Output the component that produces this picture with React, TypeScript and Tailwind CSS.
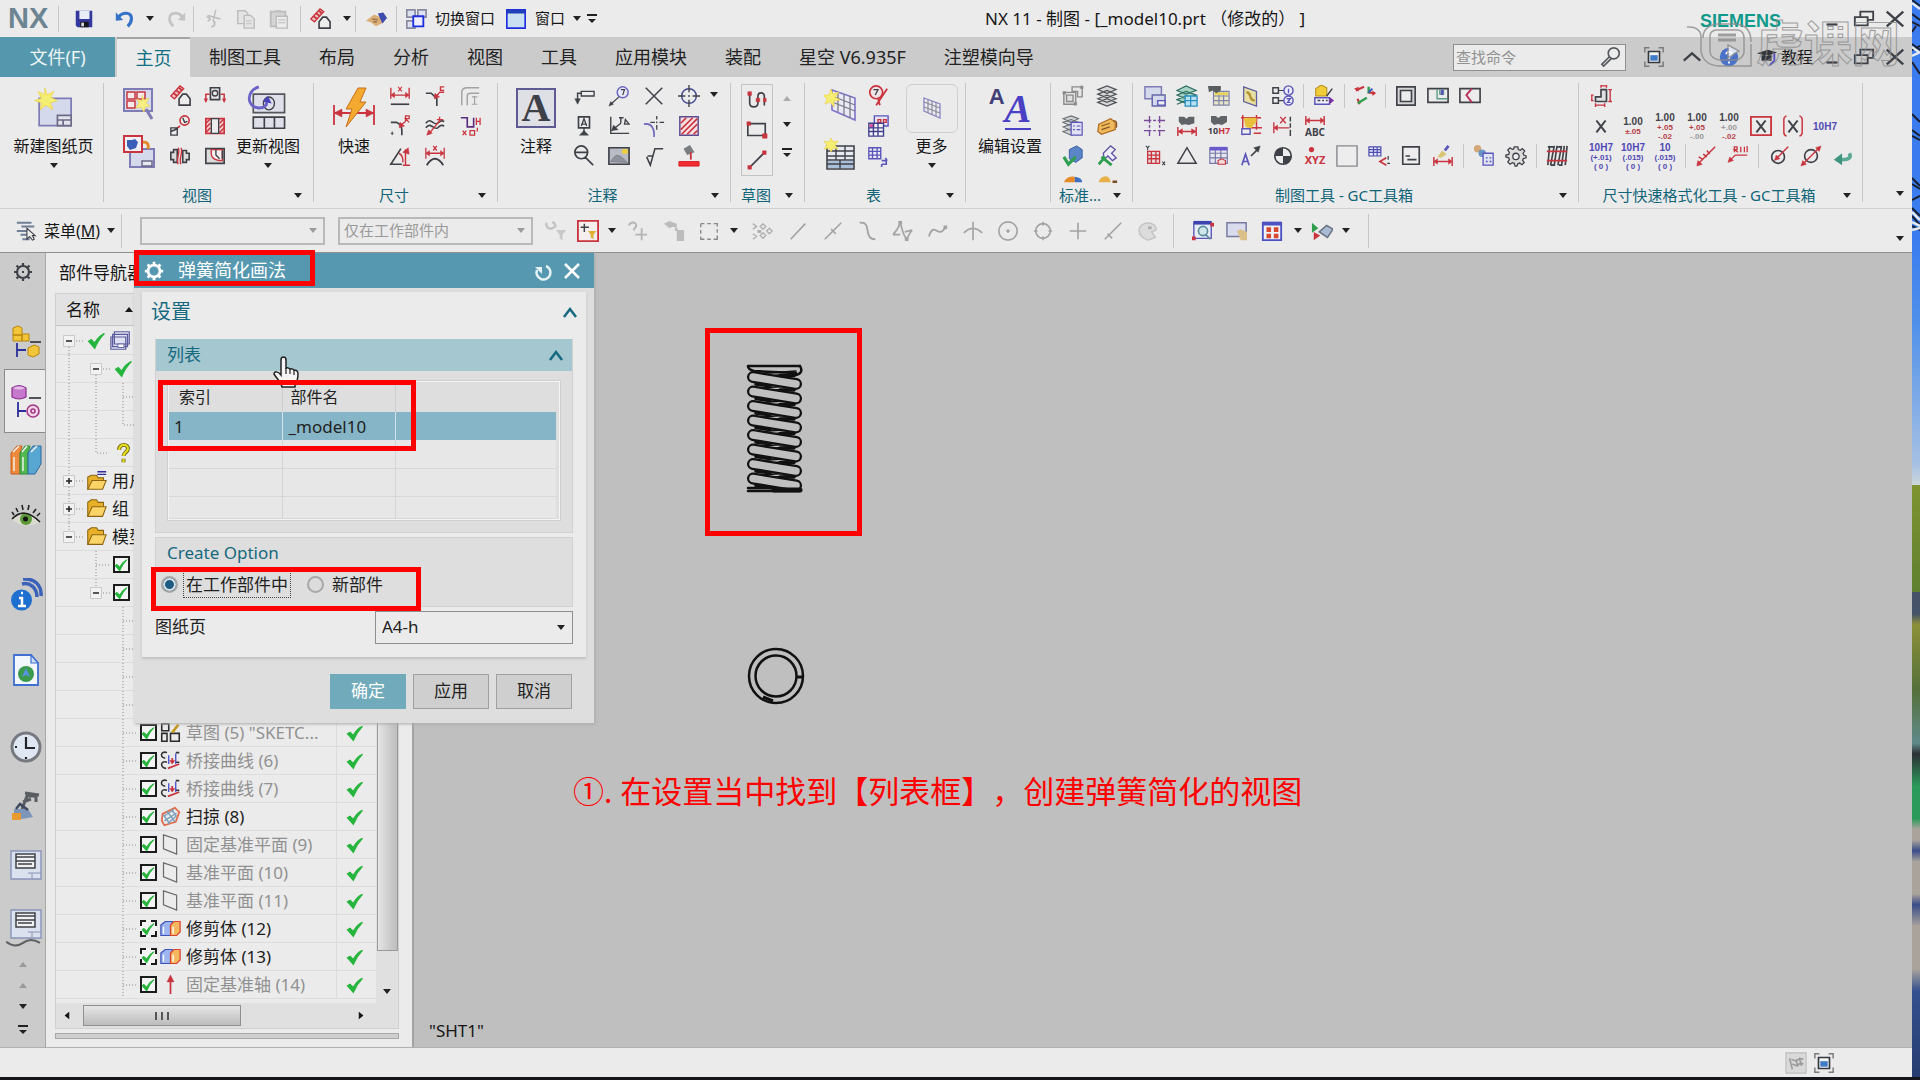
import { useState, type ReactNode } from "react"
import clsx from "clsx"

// stroke colour, fill colour, path, stroke width
type Shape = [string, string, string, number?]

const K = "#3f4148"
const R = "#c9343f"
const B = "#5a55b8"
const G = "#a3a3a3"
const L = "#d5d9ec"
const Y = "#f0cf3c"
const N = "#2f9e4f"
const O = "none"

const ICONS: Record<string, Shape[]> = {
    save: [[O, "#34389c", "M3 3h18v18H5l-2-2z"], [O, "#e8eef8", "M7 3h11v9H7z"], [O, "#16181c", "M8 15h9v6H8z"], [O, "#d8d8d8", "M9 16h3v4H9z"]],
    undo: [["#3572c8", O, "M5 10c4-6 15-6 14 2 0 4-2 6-4 8", 3.5], [O, "#3572c8", "M2 14V5l8 8z"]],
    redo: [["#c4c4c4", O, "M19 10C15 4 4 4 5 12c0 4 2 6 4 8", 3], [O, "#c4c4c4", "M22 14V5l-8 8z"]],
    cut: [["#bcbcbc", O, "M14 2l-3 12M5 8l14 4"], ["#bcbcbc", O, "M9 20a2.500 3 0 1 0 2-6M5 14a3 2 0 1 0-1-4", 2]],
    copy: [["#bcbcbc", "#e4e4e4", "M3 3h8l3 3v11H3z"], ["#bcbcbc", "#e4e4e4", "M10 8h7l4 4v10H10z"], ["#c8c8c8", O, "M12 14h6M12 17h6"]],
    paste: [["#bcbcbc", "#d4d4d4", "M3 4h16v16H3z", 2], ["#bcbcbc", "#ececec", "M9 9h12v13H9z"], ["#c4c4c4", O, "M11 13h8M11 16h8M8 3h6"]],
    section: [[R, "#f1c9c9", "M2 12L12 1l4 3L6 15z"], [R, O, "M5 9l4 3M8 6l4 3M11 3l3 3", 2], [K, "#ededed", "M11 22v-7l4-5h4l4 5v7z", 1.8]],
    hand: [[O, "#d9ae77", "M1 14L10 7l7 3 3 6-8 4-5-4z"], [O, "#3f4cae", "M14 6l6-1 4 6-5 6z"], ["#9b7549", O, "M8 12l6 1M9 15l4 0"]],
    switchwin: [["#8a8aa0", "#dce2f2", "M2 2h9v8H2zM14 2h9v8h-9zM2 14h9v8H2z", 1.8], ["#1e2fe0", "#eef", "M9 9h11v11H9z", 2]],
    window: [["#1e2fe0", "#c9dff2", "M2 2h20v20H2z", 1.8], [O, "#1e3fb8", "M2 2h20v4H2z"]],
    sheet: [["#7f7bb5", L, "M4 9h28v24H4z"], ["#6c6a88", "#e4e4ec", "M20 24h12v9H20zM20 28h12M25 28v5"], [Y, "#f4ee72", "M9 0l2 6 6-3-3 5 6 3-6 2 2 6-6-4-5 4 1-6-6-2 6-2-3-6 6 3z", 0.6]],
    viewwizard: [["#7f7bb5", L, "M2 2h28v22H2z", 2], [R, "#f5e9ec", "M5 5h8v7H5zM15 5h8v7h-8zM5 14h8v7H5z"], [Y, "#f6ef86", "M20 8l2 5 5-2-3 5 4 3-5 1-1 5-3-5-5 1 3-5-2-4 5 2z", 0.6], ["#7f7bb5", O, "M24 22l6 10", 3]],
    baseview: [["#7f7bb5", L, "M8 14h24v18H8z", 2], ["#6c6a88", "#e8e8f0", "M20 26h10v5H20z"], [R, "#f0f0f5", "M2 1h18v16H2z", 2], [O, "#3b5fb8", "M5 5h5l3-1 3 3-2 6-6 2-3-4z"], ["#e38b2c", O, "M21 7c5 0 6 3 5 7", 3]],
    detail: [[R, O, "M22 6a5 5 0 1 1-10 0 5 5 0 1 1 10 0M12 12l-5 4", 1.8], [K, O, "M2 14h7v8H2zM15 3l2 5 3-1M2 18l7-3", 1.5]],
    turned: [[K, "#e5e5e5", "M7 3h10v13H7z", 1.8], [K, O, "M15 9a3 3 0 1 1-6 0 3 3 0 1 1 6 0"], [R, O, "M6 10H2v8M18 10h4v8", 1.6], [R, R, "M0 15h4l-2 4zM20 15h4l-2 4z", 0.5]],
    hatched: [[R, "#f2cccc", "M2 4h20v16H2z", 1.8], [R, O, "M2 9l5-5M2 14l5-5M2 19l5-5M17 9l5-5M17 14l5-5M17 19l5-5"], [K, "#ededed", "M8 4h8v16H8z"]],
    breakview: [[K, "#dcdcdc", "M2 8h3V5h4v14H5v-3H2zM22 9h-3V6h-4v13h4v-3h3z", 1.8], [R, O, "M10 3c3 5-3 12 0 18M13 3c3 5-3 12 0 18"]],
    cutout: [[K, "#dcdcdc", "M2 4h20v16H2z", 1.8], [R, "#f8f0f0", "M8 5c-1 7 1 12 12 12V5z"], [K, O, "M13 5v6l4 4M20 6v9"]],
    update: [["#55565e", "#dedfe8", "M8 10h34v20H8z", 1.8], [K, "#dedfe8", "M8 35h34v12H8zM20 35v12M31 35v12", 1.8], [K, O, "M31 20a6 7 0 1 1-12 0 6 7 0 1 1 12 0"], ["#6a62c8", O, "M14 2C0 6 0 24 14 25c6 0 9-3 9-8", 3], [O, "#4b43b8", "M18 18l6-6 4 8z"]],
    quick: [[R, O, "M2 18v20M42 18v20M3 26h38", 1.8], [R, R, "M2 26l8-4v8zM42 26l-8-4v8z", 0.5], ["#c96f1c", "#f4a930", "M26 1h8l-6 14h6L14 40l6-18h-6z", 1]],
    dimlin: [[R, O, "M2 3v12M22 3v12M3 11h18", 1.5], [R, R, "M2 11l4-3v6zM22 11l-4-3v6z", 0.5], [K, O, "M2 21h20", 1.8], [R, O, "M10 2l4 5M14 2l-4 5", 1.2]],
    dimchamfer: [[K, O, "M2 9h6l6 6v8", 1.8], [R, O, "M13 13l4-5h5M22 2h-4v4h4", 1.5], [R, R, "M11 15l1-6 5 4z", 0.5]],
    dimthick: [[G, O, "M3 22V8q0-5 6-5h13M9 22V12q0-3 4-3h9", 1.6], [G, O, "M17 12v9M14 13h6M14 21h6", 1.3]],
    dimradius: [[K, O, "M2 8h6q6 3 6 8v6", 1.8], [R, O, "M13 11l5-4M18 7V1h4v3h-4l4 4", 1.4], [R, R, "M11 14l1-6 5 4z", 0.5], [K, O, "M2 20h3M3.500 18v4", 1]],
    dimcurve: [[K, O, "M2 14c6-8 9 5 14-1 2-2 4-2 6-1M2 9c6-8 9 5 14-1 2-2 4-2 6-1", 1.8], [R, O, "M5 21l13-16M14 5h7M17 2v6", 1.4], [R, R, "M3 22l2-6 4 4z", 0.5]],
    dimordinate: [["#5a2f80", O, "M2 3h7v10h7V3", 1.8], [R, O, "M19 3v8M23 3v8M19 7h4M20 14v4M4 17l4 5M8 17l-4 5M12 17h5v5h-5z", 1.4]],
    dimangle: [[K, O, "M13 4L2 21h12", 1.8], [R, O, "M11 9q5 3 4 10M18 5v17M15 22h8", 1.6], [R, R, "M15 8l6-5 1 7z", 0.5]],
    dimarc: [[R, O, "M2 3v12M22 3v12M3 9h18M10 1l4 5M14 1l-4 5", 1.4], [R, R, "M2 9l4-3v6zM22 9l-4-3v6z", 0.5], [K, O, "M3 22q9-14 18 0", 2]],
    leader: [[K, O, "M5 17V9h5", 1.6], [K, "#ededed", "M9 7h14v5H9z", 1.5], [K, K, "M2 15h6l-3 6z", 0.5]],
    balloon: [["#6b66bd", "#e9e9f6", "M22 8a6 6 0 1 1-12 0 6 6 0 1 1 12 0", 1.6], [K, O, "M12 13l-9 8M14 5h4l-2 6", 1.3], [K, K, "M1 23l2-5 3 3z", 0.5]],
    xmark: [[K, O, "M3 3l18 18M21 3L3 21", 1.6]],
    target: [["#44488e", O, "M20 12a8 8 0 1 1-16 0 8 8 0 1 1 16 0", 1.6], [K, O, "M12 0v8M12 16v8M0 12h8M16 12h8M12 11v2", 1.5]],
    datum: [[K, "#ededed", "M6 2h12v12H6z", 1.8], [K, O, "M9 12l3-8 3 8M10 10h4M12 14v7", 1.5], [K, K, "M7 22h10l-5-5z", 0.5]],
    anglet: [[K, O, "M3 2v18h20M4 17L14 9M12 3h5M14 3v6M18 10h5l-4-5z", 1.5], [K, K, "M4 17l2-6 5 5z", 0.5]],
    centermark: [["#6b66bd", O, "M1 10c8-2 12 5 11 14", 1.8], [K, O, "M15 1v4M15 7v2M15 11v5M8 8h5M18 8h5", 1.4]],
    hatch: [["#5b4b8e", "#f6dfe2", "M2 2h20v20H2z", 1.6], [R, O, "M3 9l6-6M3 16L16 3M4 21L21 4M10 21l11-11M17 21l4-4", 1.8]],
    zoomout: [[K, O, "M16 8a7 7 0 1 1-14 0 7 7 0 1 1 14 0M2 8h14M13 13l9 9", 1.8]],
    image: [[K, "#b9bcc4", "M1 3h22v18H1z", 1.8], [Y, Y, "M16 5h5v4h-5z", 1], ["#7d8088", "#8e929a", "M3 18c6-10 9-8 18 1z", 1]],
    rough: [[K, O, "M4 13l4 9 5-18h9M5 12h5", 1.7]],
    bucket: [[O, "#7a7d80", "M6 4l7-4 5 8-8 3z"], [R, O, "M14 8v8", 2], ["#dd1f28", "#ee2b30", "M1 18h22v5H1z", 1]],
    profile: [[K, O, "M4 3v12c0 6 9 6 9 0V8c0-5 7-5 7 0v10", 1.8], [R, R, "M2 3h4v4H2zM11 10h4v4h-4zM19 10h3v4h-3z", 0.5]],
    rect: [[K, O, "M2 5h19v13H2z", 1.8], [R, R, "M1 3h4v4H1zM18 16h5v5h-5z", 0.5]],
    line: [[K, O, "M4 20L20 4", 1.8], [R, R, "M2 18h4v4H2zM18 2h4v4h-4z", 0.5]],
    table: [["#7c74c8", "#eceaf4", "M8 2l23 8v22L8 22z", 1.6], ["#777a88", O, "M8 8l23 9M8 14l23 9M14 4v20M20 6v22M26 8v22", 1.3], [Y, "#f4ee72", "M7 1l2 5 6-2-4 5 5 3-6 1 0 6-4-5-5 2 2-5-4-4 6 0z", 0.6]],
    parts: [[K, "#e6eaf0", "M3 8h27v23H3z", 1.6], [K, O, "M3 13h27M3 18h27M3 22h27M12 8v14M21 8v14", 1.4], [O, "#a9bfda", "M4 23h25v7H4z"], [K, O, "M16 22v9M3 26h27", 1.4], [Y, "#f4ee72", "M7 0l2 4 5-1-3 4 3 4-5-1-2 4-2-4-5 1 3-4-3-4 5 1z", 0.6]],
    balloon2: [[R, "#eee3e6", "M17 8a7 7 0 1 1-14 0 7 7 0 1 1 14 0", 1.8], [K, O, "M7 5h5l-3 6", 1.4], [R, O, "M22 4L10 22M12 14l2 8", 2]],
    hole: [["#5a55b8", "#e4e2f6", "M8 1h15v11H8z", 1.5], [R, O, "M12 5h3v3h-3zM18 5h3v3h-3z"], ["#3f3f8a", "#f4f4fa", "M2 9h16v14H2z", 1.5], [O, "#d84c9c", "M3 10h5v4H3z"], ["#3f3f8a", O, "M2 14h16M2 18h16M7 9v14M12 9v14"]],
    tableexp: [["#5a55b8", "#ecebf8", "M2 3h13v12H2zM2 7h13M2 11h13M6 3v12M11 3v12", 1.5], [B, O, "M16 17h5v4h-5M20 14l2 3M16 21v3", 1.8]],
    tablesm: [["#8a84c4", "#eceaf4", "M4 2l16 6v14L4 15z", 1.3], ["#8a8c96", O, "M4 6l16 6M4 11l16 6M8 4v13M12 5v14M16 7v13", 1.2]],
    group: [["#8b8b8b", "#e0e0e0", "M2 8h13v13H2zM5 11h7v7H5z"], ["#8b8b8b", "#e8e8e8", "M11 2h11v11h-5V7h-6z"], ["#8b8b8b", "#8b8b8b", "M1 7h3v3H1zM13 19h3v3h-3zM20 1h3v3h-3z", 0.5]],
    layers: [["#4f5358", "#d8d8d8", "M2 19l10-4 10 4-10 4zM2 15l10-4 10 4-10 4zM2 10l10-4 10 4-10 4zM2 5l10-4 10 4-10 4z", 1.3]],
    layerdoc: [["#6a6e74", "#cfd4d8", "M1 18l9-3 8 3-8 4zM1 13l9-3 8 3-8 4zM1 8l9-3 8 3-8 4zM1 4l9-3 8 3-8 4z", 1.2], [B, "#e2e2f6", "M10 8h12v14H10zM12 12h2M16 12h4M12 16h2M16 16h4", 1.3]],
    tag: [["#b06a20", "#edb95c", "M3 10l13-6 5 4v8L6 21l-4-3z", 1.3], ["#8a5a20", O, "M6 12l9-3M6 16l9-3M19 7c4-3 4 5 3 7", 1.4]],
    checkcube: [["#345aa0", "#5a86c8", "M8 5l8-4 6 4v9l-7 5-7-4z", 1], [N, O, "M2 13l5 8 8-8", 3.5]],
    checkpipe: [["#5a4fa0", "#eeeef8", "M8 9l8-8 5 4-4 4 5 5-4 3-5-5-4 4z", 1.4], [N, O, "M3 21l7-8M6 13l11 9", 3]],
    cone: [[O, "#e88a28", "M2 8a10 9 0 0 1 12-6v6z"], [O, "#3f6fc0", "M14 2q8 1 8 6h-8z"]],
    cone2: [[O, "#e8b048", "M3 8a7 8 0 0 1 12-4l1 4z"], [O, "#7a4f28", "M18 6h5v3h-5z"]],
    newsheet: [["#7f7bb5", L, "M1 2h18v13H1z", 1.6], ["#6668a8", L, "M9 11h14v12H9z", 1.6], [B, "#eee", "M15 17h8v5h-8z"]],
    layers2: [["#2e6f62", "#a8d4c4", "M1 6l10-5 11 5-11 4zM1 11l10-4 11 4-11 4zM1 16l10-4 11 4-11 4zM1 21l10-4", 1.3], ["#2a8ec0", "#b8e2f2", "M10 12h13v11H10zM10 17h13M16 12v11", 1.4]],
    findtable: [["#8084a8", "#e9e6c8", "M6 7h17v15H6zM6 12h17M6 17h17M12 7v15M17 7v15", 1.3], [O, "#e8d35c", "M7 8h15v3H7z"], [O, "#5a5d60", "M0 1h14v5l-5 3-4-3-4 2z"]],
    pagey: [["#5f5fa0", "#e8e0a0", "M4 2l14 5v16L4 18z", 1.4], ["#b09030", O, "M7 8c7 0 1 8 9 9", 2.5]],
    balloons12: [[K, "#ededed", "M1 3h6v6H1zM1 14h6v6H1z", 1.6], [K, O, "M7 6h6M7 17h6", 1.3], [B, "#eeeefa", "M23 6a5 5 0 1 1-10 0 5 5 0 1 1 10 0M23 17a5 5 0 1 1-10 0 5 5 0 1 1 10 0", 1.5], [B, O, "M18 4v5M16 15h4l-3 4h3"]],
    cubelabel: [["#b8901c", "#f2cd3a", "M3 4l6-4 6 3v9H3z", 1.2], [B, "#f0f0fa", "M2 14h16v7H2z", 1.6], [K, O, "M5 17h3M10 17h2M14 17h2M15 12l6-8", 1.6], [O, "#7a2fa0", "M18 13l5 4-5 4z"]],
    csys: [[R, O, "M2 6l9-4M15 8l8 1M4 15l2 6", 2.4], [O, R, "M20 6l4 3-4 3zM0 4l5-2v5z"], [N, O, "M4 20l10-6M16 9V2", 2.6], ["#3050c0", O, "M16 8l4-4", 2]],
    frame: [[K, "#d4d4d4", "M2 2h20v20H2z", 1.8], [K, "#ededed", "M6 6h12v12H6z", 1.8]],
    frame2: [[K, "#ececec", "M1 4h22v15H1z", 1.8], ["#5a9a80", O, "M11 5v10h11M14 5v5h4V5", 1.5], [O, B, "M15 5h3v6h-3z"]],
    frame3: [[K, "#ececec", "M1 4h22v15H1z", 1.8], ["#b82f58", O, "M14 4L8 11l6 8", 2]],
    gridlines: [["#7a4b98", O, "M6 1v8M6 11v3M6 16v7M17 1v8M17 11v3M17 16v7M0 6h8M10 6h3M15 6h8M0 17h8M10 17h3M15 17h8", 1.5]],
    finddim: [[O, "#606468", "M3 2h6l2 2 3-2h6v7l-6 2-4-1-4 1-3-4z"], [R, O, "M2 13v10M22 13v10M3 18h18", 1.6], [R, R, "M2 18l5-3v6zM22 18l-5-3v6z", 0.5]],
    find10: [[O, "#606468", "M4 0h5l2 2 3-2h6v6l-5 3-4-1-4 1-3-3z"]],
    dimrect: [[R, O, "M1 3h22M3 0v22M18 0v16M12 14h12M15 20h8", 1.6], [O, "#e8c03c", "M4 3h14v4l-6 8-6-2z"], [B, "#eee", "M2 15h9v6H2z", 1.5]],
    dimx: [[R, O, "M2 8v12M3 14h16M9 2l6 7M15 2l-6 7", 1.5], [R, R, "M2 14l4-3v6z", 0.5], [K, O, "M20 2v5M20 9v5M20 16v7", 1.6]],
    dimabc: [[R, O, "M2 1v10M22 1v10M3 6h18", 1.6], [R, R, "M2 6l4-3v6zM22 6l-4-3v6z", 0.5]],
    gridxy: [[R, "#e9dada", "M4 7h13v13H4zM4 11h13M4 15h13M8 7v13M13 7v13", 1.4], [K, O, "M2 1l2 2 2-2M4 3v3M20 18l3 4M23 18l-3 4", 1.2]],
    triangle: [[K, O, "M12 3l10 17H2z", 1.6]],
    tabler: [["#7478a8", "#e8e6ee", "M2 3h19v17H2zM2 9h19M2 14h19M8 3v17M14 3v17", 1.3], [O, "#6a5acb", "M2 2h19v4H2z"], [R, "#f5dada", "M11 21v-4l4-2 4 2v4z", 1.2]],
    arrowA: [[K, O, "M12 12l7-7", 1.8], [K, K, "M22 1l-7 2 5 5z", 0.5], [B, O, "M2 22l4-12 4 12M3 18h6", 1.8]],
    quarter: [[K, "#ededed", "M21 12a9 9 0 1 1-18 0 9 9 0 1 1 18 0", 1.8], [O, K, "M12 3v9H3a9 9 0 0 1 9-9zM12 21v-9h9a9 9 0 0 1-9 9z"]],
    point: [[O, R, "M7 4a3 3 0 1 1-6 0 3 3 0 1 1 6 0"]],
    blank: [["#85878c", "#ededed", "M1 1h22v22H1z", 1.5]],
    tablec: [["#4c4cb0", "#e8e8fa", "M1 2h13v10H1zM1 5h13M1 8h13M6 2v10M10 2v10", 1.3], [R, O, "M20 14l-7 4 7 4", 1.8], [K, O, "M22 12v4M21 20h3", 1.3]],
    form: [[K, "#ededed", "M3 2h18v19H3z", 1.8], [K, O, "M6 12h5M8 16h10", 1.8]],
    brushdim: [[R, O, "M2 13v10M22 13v10M3 18h18", 1.6], [R, R, "M2 18l4-3v6zM22 18l-4-3v6z", 0.5], [O, "#d8c472", "M6 13l5-7 5 4-6 4z"], [B, O, "M14 6l4-5", 3]],
    gearlist: [[O, "#d2a878", "M9 4a4 4 0 1 1-8 0 4 4 0 1 1 8 0"], [O, "#6b94c4", "M14 9a4 4 0 1 1-8 0 4 4 0 1 1 8 0"], [B, "#e2e4f4", "M11 9h11v13H11zM14 14h2M18 14h2M14 18h2M18 18h2", 1.4]],
    gear: [[K, "#dcdcdc", "M10 2h4l.6 3 2 .8L19 4l2.500 2.500-1.800 2.500.8 2L23 12v2l-3 .8-.8 2L21 19l-2.500 2.500-2.500-1.800-2 .8L13 23h-2l-.9-3-2-.8L5.500 21 3 18.500l1.800-2.500-.8-2L1 13v-2l3-.8.8-2L3 5.500 5.500 3 8 4.800l1.500-.5z", 1.4], [K, "#ededed", "M15.500 12.500a3.500 3.500 0 1 1-7 0 3.500 3.500 0 1 1 7 0", 1.4]],
    springs: [[K, O, "M4 1L2 22M9 1L5 22M12 1l-3 21M17 1l-4 21M20 1l-3 21M23 1l-2 21M2 2h7M12 2h5M5 22h5M14 22h4", 1.8], [R, O, "M1 7h22M1 17h22", 1.8]],
    dimpart: [[K, "#e0e0e0", "M12 5h6v13H6v-5h6z", 1.8], [R, O, "M12 1h6M12 0v3M18 0v3M22 5v13M20 5h4M20 18h4M6 22h10M6 20v4M16 20v4M1 11h3M1 17h3M2 11v6", 1.5]],
    plainx: [[K, O, "M7 6l10 13M17 6L7 19", 2.2]],
    boxedx: [[R, O, "M1 2h22v20H1z", 2], [K, O, "M7 6l10 13M17 6L7 19", 2.2]],
    parenx: [[R, O, "M5 1Q2 2 2 5v14q0 3 3 4M19 1q3 1 3 4v14q0 3-3 4", 1.6], [K, O, "M7 6l10 13M17 6L7 19", 2.2]],
    slopedim: [[R, O, "M3 21L22 2M4 13l5 3M9 10l4 3M13 6l3 4", 1.6], [R, R, "M2 23l1-6 5 4z", 0.5]],
    leaddim: [[R, O, "M3 17l6-6h13M8 8V2h3v3H8l4 3M15 2v6M19 2v6M22 1v7", 1.4], [R, R, "M1 19l2-6 4 4z", 0.5]],
    dia1: [[K, O, "M18 13a7 7 0 1 1-14 0 7 7 0 1 1 14 0", 1.8], [R, O, "M10 14L22 2", 1.6], [R, R, "M7 17l2-6 4 4z", 0.5]],
    dia2: [[K, O, "M19 12a7 7 0 1 1-14 0 7 7 0 1 1 14 0", 1.8], [R, O, "M3 21L21 3", 1.6], [R, R, "M1 23l2-6 4 4zM23 1l-2 6-4-4z", 0.5]],
    back: [["#5aa896", O, "M19 9c3 6-3 7-9 7", 4], [O, "#3f9480", "M2 16l9-7v13z"]],
    menu: [["#6f7f98", O, "M2 3h16M7 7h14M2 12h12M6 16h8M8 21h8", 2.2], [K, "#eee", "M13 9v12l3-3 3 4 2-1-2-4h3z", 1.2]],
    filterg: [["#c2c2c2", O, "M2 3a4 4 0 1 0 8 4M8 2a5 5 0 0 1 3 6", 2.5], [O, "#c8c8c8", "M12 11h11l-4 5v6l-3-2v-4z"]],
    filter: [[R, "#f5eeee", "M1 1h22v22H1z", 2], [K, O, "M8 4v9M4 8h9", 1.6], [O, "#e0ae30", "M12 12h9l-3 4v5l-3-2v-3z"]],
    rotplus: [["#b4b4b4", O, "M2 6c2-5 9-4 8 1l-3 4M9 16h13M16 9v13", 2]],
    filterdoc: [[O, "#bcbcbc", "M1 4l6-3 8 3v5l-4-2-4 2zM13 9h3v3h-3zM15 11h8v12h-8z"]],
    marquee: [["#8a8a8a", O, "M3 4h4M10 4h4M17 4h4v3M21 10v4M21 17v4h-4M14 21h-4M7 21H3v-3M3 15v-4M3 8V4", 1.5]],
    dots: [["#b0b0b0", O, "M1 4l4 3-4 3M1 15l4 3-4 3M12 4l3 3-3 3-3-3zM12 14l3 3-3 3-3-3zM19 9l3 3-3 3-3-3z", 1.5], [O, "#aaa", "M6 11h4v3H6z"]],
    seg: [[G, O, "M4 21L20 4", 1.8]],
    segdot: [[G, O, "M3 21L21 3M10 10l5 5", 1.8]],
    curve: [[G, O, "M3 3c14-2 3 18 17 18", 2]],
    spl: [[G, O, "M1 16C5 12 8 6 9 3c2 6 3 14 7 18 2-4 4-8 6-10M1 16h8M14 13l8-2", 1.8], [O, G, "M7 1h4v4H7zM14 19h4v4h-4z"]],
    wave: [[G, O, "M2 18C8 0 12 22 20 8", 2], [O, G, "M18 6h4v4h-4z"]],
    arcv: [[G, O, "M2 14q10-10 20 0M12 2v20", 1.8]],
    circ: [[G, O, "M22 12a10 10 0 1 1-20 0 10 10 0 1 1 20 0M12 10v4M10 12h4", 1.8]],
    circ4: [[G, O, "M20 12a8 8 0 1 1-16 0 8 8 0 1 1 16 0M12 2v4M12 18v4M2 12h4M18 12h4", 1.8]],
    plus: [[G, O, "M12 3v18M3 12h18", 1.8]],
    seg2: [[G, O, "M3 21L21 3M6 15l5 5", 1.8]],
    face: [["#c4c4c4", "#dcdcdc", "M3 8c6-8 18-5 18 3l-5 2 4 6-8 3C4 19 1 14 3 8z", 1.6], [O, "#b0b0b0", "M12 7h4v3h-4z"]],
    fitwin: [[B, "#e6eef8", "M2 2h19v18H2z", 1.5], [O, "#3c44b0", "M2 1h19v4H2z"], ["#5d8a9a", "#cfe6ea", "M17 12a5 5 0 1 1-10 0 5 5 0 1 1 10 0M15 16l5 5", 1.8], [O, R, "M0 18h4v4H0zM20 3h4v4h-4z"]],
    panwin: [["#777aa0", "#d8dcec", "M1 3h21v15H1z", 1.6], [O, "#dcc08a", "M12 12l4-2 7 3v9h-7z"]],
    layout: [["#4b51c0", "#eef0fa", "M2 3h20v19H2z", 2], [O, "#4b51c0", "M2 2h20v4H2z"], [O, "#d8482c", "M6 8h5v5H6zM14 8h5v5h-5zM6 15h5v5H6zM14 15h5v5h-5z"]],
    orient: [[O, N, "M1 3l7 6-7 5z"], [O, R, "M3 13l7 4-7 5z"], ["#6b7380", "#a9bcd4", "M9 13l8-7 7 4-6 9z", 1.6]],
    full: [["#7b7b7b", O, "M2 7V2h5M17 2h5v5M22 17v5h-5M7 22H2v-5", 1.6], ["#33383f", "#f4f4f4", "M6 6h12v12H6z", 1.8], [O, "#3e7cc8", "M8 10h8v6H8z"]],
    flag: [["#bdbdbd", "#d9d9d9", "M1 1h22v22H1z", 1.2], ["#9c9c9c", O, "M5 7l3 12M7 8l5 2 4-3 4 1M8 13l5 2 4-3 3 1M12 8l2 8M16 8l2 7", 1.8]],
    mag: [["#55585c", "#ececec", "M21 8a6 6 0 1 1-12 0 6 6 0 1 1 12 0M10 12l-8 8 2 2 8-8", 1.8]],
    min: [[K, O, "M6 18h12", 2.4]],
    restore: [[K, O, "M8 9V4h14v9h-5M2 10h14v9H2z", 2]],
    close: [[K, O, "M3 4l18 16M21 4L3 20", 2.6]],
    up: [[K, O, "M3 16l9-8 9 8", 2.4]],
    help: [[O, "#4a72c8", "M22 12a10 10 0 1 1-20 0 10 10 0 1 1 20 0"], ["#fff", O, "M9 9c0-4 7-3 6 0-.5 2-3 2-3 5M12 17v2", 2]],
    hat: [[O, "#33343a", "M1 8l12-4 10 3-11 4zM6 10v6h11v-6z"], ["#5a4fc0", O, "M20 8v8l-5 5", 2]],
    railgear: [[K, O, "M18 12a6 6 0 1 1-12 0 6 6 0 1 1 12 0M12 3v3M12 18v3M3 12h3M18 12h3M5.500 5.500l2 2M16.500 16.500l2 2M18.500 5.500l-2 2M7.500 16.500l-2 2", 2.2], [O, K, "M11 11h2v2h-2z"]],
    asmnav: [["#b8860b", "#f3c53a", "M3 3l5-2 4 2v7H3zM3 10h9v6H3zM12 9h7v7h-7z", 1], ["#2b2f9a", O, "M7 18v14M7 25h9", 1.8], [K, O, "M20 17h11", 1.8], ["#b8860b", "#f3c53a", "M18 23l6-3 5 2v7l-6 3-5-2z", 1]],
    partnav: [["#8a2f8e", "#c678cc", "M1 4q7-5 14 0v9q-7 4-14 0z", 1.2], [O, "#e7bfe9", "M2 4q6-3 12 0-6 3-12 0z"], ["#2b2f9a", O, "M7 18v15M7 27h8", 1.8], [K, O, "M18 14h12", 1.8], ["#a03a86", "#f3d3e8", "M28 27a6 6 0 1 1-12 0 6 6 0 1 1 12 0M24 27a2 2 0 1 1-4 0 2 2 0 1 1 4 0", 1.6]],
    books: [["#c85d1c", "#ee8a3c", "M1 9l6-7h5l-2 7v21H1z", 1], ["#2d8a34", "#52b84e", "M10 9l5-7h5l-2 7v21h-8z", 1], ["#2a6a9e", "#58a6d2", "M18 9l5-7h8v18l-6 10h-7z", 1], ["#f0f0f0", O, "M3 8l6-6M12 8l5-6M21 8l6-6M4 13v14M13 13v14", 1.5]],
    eye: [[O, "#d8dcd0", "M2 20q12-12 28 2-14 8-28-2z"], [O, "#5f9a3a", "M22 19a6 6 0 1 1-12 0 6 6 0 1 1 12 0"], [O, "#141414", "M18 19a2.500 2.500 0 1 1-5 0 2.500 2.500 0 1 1 5 0"], ["#222", O, "M2 19q12-13 28 3M4 15l-2-3M8 12l-2-4M13 10l-1-5M18 10l1-5M23 13l3-4M27 16l3-3", 1.6]],
    info: [["#3a62b8", O, "M12 6c8-2 15 4 15 13M13 1c11-1 19 6 18 17", 3.5], [O, "#1d6fd0", "M22 22a10.500 10.500 0 1 1-21 0 10.500 10.500 0 1 1 21 0"], ["#fff", O, "M9 20h3v8M8 28h8M11 15h2", 2.5]],
    web: [["#3f6fd0", "#f2f6fd", "M4 1h17l7 8v22H4z", 1.8], ["#3f6fd0", "#cfdff8", "M21 1v8h7z", 1.2], [O, "#3a9a4e", "M24 20a8 8 0 1 1-16 0 8 8 0 1 1 16 0"], [O, "#5a94e0", "M16 14l4 9-4-2-4 2z"]],
    clock: [["#777a80", "#dfe8f2", "M30 16a14 14 0 1 1-28 0 14 14 0 1 1 28 0", 3], ["#22252a", O, "M16 6v11h9M5 16h2M16 28v-2", 2.2]],
    robot: [["#5a5d62", O, "M12 20l5-13h9v6M15 4l14 2M13 13l8-3", 3], [O, "#7d95b8", "M4 20h14l5 8-11 2-8-3z"], [O, "#e89a30", "M2 24h9v7H2z"], ["#3f4a60", O, "M6 20l4-5 8 6", 2.5]],
    panel: [["#8a94b8", "#dbe1ee", "M1 2h30v28H1z", 1.4], [K, "#f2f2f2", "M6 5h19v14H6z", 1.5], [K, O, "M6 8h19M6 12h19M8 15h14", 1.5], ["#8a94b8", O, "M18 24h13M22 24v6", 1]],
    squig: [["#5e6064", O, "M1 14q8 6 15 1t15 0", 1.8]],
    check: [["#26b53c", "#26b53c", "M3 13l3-2 4 4q4-8 11-11-7 7-11 17z", 1.4]],
    part: [["#5c5c9c", "#dfe1f2", "M5 2h17v14H5zM3 5h17v14H3zM1 8h17v14H1z", 1.4], ["#5c5c9c", "#fff", "M9 16h7v4H9z", 1]],
    question: [["#6a6410", O, "M7 9c0-8 11-7 10-1-.5 4-5 4-5 8M12 19v4", 4.5], ["#e8dc20", O, "M7 9c0-8 11-7 10-1-.5 4-5 4-5 8M12 19v4", 2.5]],
    folder: [["#8a6410", "#e8b028", "M2 21V5l4-3h6l2 3h6v5", 1.2], ["#8a6410", "#fbd468", "M2 21l5-11h16l-4 11z", 1.2]],
    folderu: [["#8a6410", "#e8b028", "M2 22V8l4-2h6l2 3h6v3", 1.2], ["#8a6410", "#fbd468", "M2 22l5-10h16l-4 10z", 1.2], ["#2c2f9c", O, "M13 2h10M13 5h10", 1.5]],
    sketch: [["#2b2b2b", O, "M2 2h8v8H2zM2 13h6v9H2zM12 13h10v9H12z", 1.8], ["#c8961c", O, "M14 12l7-9", 3]],
    bridge: [["#333", O, "M8 3c-8-3-8 7-2 6M8 14c-8-3-8 7-1 7M22 3h-4M18 14h4", 1.8], ["#3b43c8", O, "M10 6v10M18 4v12", 1.4], [R, O, "M9 21l13-5M14 9v6", 2], [R, R, "M11 12h6l-3 4z", 0.5]],
    sweep: [["#df6a4c", O, "M3 9L17 2l5 5-4 11L5 22l-3-5z", 2], ["#7ba0bc", O, "M4 12l12-8M5 17L19 8M9 20l9-8M8 6l9 12M13 4l6 8M4 10l7 10", 1.6]],
    plane: [["#6a6c70", "#ececec", "M4 1l15 5v17L4 17z", 1.4]],
    trim: [["#3e52b8", "#9db6f0", "M1 8l5-4h8v16H1z", 1.4], ["#d84430", "#f5b860", "M12 8l4-4h7v12l-4 4h-7z", 1.4], ["#fff", O, "M4 10v8M15 10v8", 1.5]],
    axis: [[R, O, "M12 8v15", 2], [R, R, "M8 9h8l-4-8z", 0.5]],
}

function Icon({ name, className = "size-6", box = "0 0 24 24" }: { name: string; className?: string; box?: string }) {
    return (
        <svg viewBox={box} className={clsx("shrink-0", className)} aria-hidden="true">
            {ICONS[name].map(([stroke, fill, d, width], i) => (
                <path key={i} d={d} stroke={stroke} fill={fill} strokeWidth={width ?? 1.5} />
            ))}
        </svg>
    )
}

function Caret({ className = "text-[#222]" }: { className?: string }) {
    return (
        <svg viewBox="0 0 8 5" className={clsx("h-[5px] w-2 shrink-0", className)} aria-hidden="true">
            <path d="M0 0h8L4 5z" fill="currentColor" />
        </svg>
    )
}

function OverflowCaret() {
    return (
        <svg viewBox="0 0 10 10" className="size-[10px] shrink-0 text-[#222]" aria-hidden="true">
            <path d="M0 0h10v2H0zM1 5h8l-4 4z" fill="currentColor" />
        </svg>
    )
}

function Tool({ name, label, className = "w-8" }: { name: string; label?: string; className?: string }) {
    return (
        <button type="button" aria-label={label ?? name} className={clsx("flex h-[30px] shrink-0 items-center justify-center", className)}>
            <Icon name={name} className="size-[22px]" />
        </button>
    )
}

function Divider({ className = "h-6" }: { className?: string }) {
    return <div className={clsx("w-px shrink-0 bg-[#c6c6c6]", className)} />
}

// "|" in a row stands for a thin divider
function ToolRow({ items, cell }: { items: string[]; cell?: string }) {
    return (
        <div className="flex items-center">
            {items.map((item, i) =>
                item === "|" ? (
                    <div key={i} className="flex w-[9px] justify-center">
                        <Divider />
                    </div>
                ) : (
                    <Tool key={i} name={item} className={cell} />
                )
            )}
        </div>
    )
}

function Group({ label, className, more = true, children }: { label?: string; className: string; more?: boolean; children?: ReactNode }) {
    return (
        <section className={clsx("flex shrink-0 pt-1", className)}>
            <div className="flex min-w-0 flex-1 flex-col">
                <div className="flex h-[102px] overflow-hidden">{children}</div>
                <div className="flex h-6 items-center pr-[11px]">
                    <h2 className="flex-1 pr-1 text-center text-[15px] whitespace-nowrap text-[#0f6478]">{label}</h2>
                    {more && <Caret />}
                </div>
            </div>
            <Divider className="my-[2px] h-[119px]" />
        </section>
    )
}

function BigTool({ children, label, caret, className }: { children: ReactNode; label: string; caret?: boolean; className?: string }) {
    return (
        <button type="button" className={clsx("flex shrink-0 flex-col items-center", className)}>
            <span className="flex h-[54px] items-center justify-center">{children}</span>
            <span className="h-7 text-[16px] leading-[22px] whitespace-nowrap">{label}</span>
            {caret && <Caret />}
        </button>
    )
}

function Tolerance({ top, lines, blue }: { top: string; lines: string[]; blue?: boolean }) {
    return (
        <button type="button" className="flex h-[30px] w-8 flex-col items-center justify-center font-['Liberation_Sans',sans-serif] font-bold">
            <span className={clsx("text-[10px] leading-[11px]", blue ? "text-[#5048b4]" : "text-[#3f4148]")}>{top}</span>
            {lines.map((line, i) => (
                <span key={i} className={clsx("text-[8px] leading-[9px]", blue ? "text-[#5048b4]" : line.endsWith("00") ? "text-[#999]" : "text-[#b8414a]")}>
                    {line}
                </span>
            ))}
        </button>
    )
}

function TitleBar() {
    return (
        <header className="flex h-[37px] shrink-0 items-center pr-[2px]">
            <span className="w-[58px] pl-2 font-['Liberation_Sans',sans-serif] text-[29px] leading-none font-bold text-[#6d8593]">NX</span>
            <Divider className="h-[26px]" />
            <Tool name="save" className="w-[50px]" />
            <Tool name="undo" className="w-8" />
            <div className="flex w-[18px] justify-center"><Caret /></div>
            <Tool name="redo" className="w-[34px]" />
            <Divider className="h-[26px]" />
            <Tool name="cut" className="w-10" />
            <Tool name="copy" className="w-6" />
            <Tool name="paste" className="w-[42px]" />
            <Divider className="h-[26px]" />
            <Tool name="section" className="w-[38px]" />
            <div className="flex w-4 justify-center"><Caret /></div>
            <Divider className="h-[26px]" />
            <Tool name="hand" className="w-10" />
            <Divider className="h-[26px]" />
            <button type="button" className="flex items-center gap-2 pl-2 text-[15px]">
                <Icon name="switchwin" className="size-[22px]" />
                切换窗口
            </button>
            <button type="button" className="flex items-center gap-2 pl-[10px] text-[15px]">
                <Icon name="window" className="size-[22px]" />
                窗口
                <Caret />
            </button>
            <div className="pl-[6px]"><OverflowCaret /></div>
            <h1 className="flex-1 pl-[388px] text-[17px] whitespace-nowrap">NX 11 - 制图 - [_model10.prt （修改的） ]</h1>
            <span className="w-[116px] pt-[5px] font-['Liberation_Sans',sans-serif] text-[18px] leading-none font-bold text-[#119a8c]">SIEMENS</span>
            <Tool name="min" label="最小化" />
            <Tool name="restore" label="还原" />
            <Tool name="close" label="关闭" className="w-[30px]" />
        </header>
    )
}

const TABS = ["制图工具", "布局", "分析", "视图", "工具", "应用模块", "装配", "星空 V6.935F", "注塑模向导"]

function TabBar() {
    return (
        <nav className="flex h-10 shrink-0 items-stretch bg-[#cbcbcb] pr-[2px] text-[18px]">
            <button type="button" className="w-[115px] bg-[#5598ae] text-[#eef6f8]">文件(F)</button>
            <button type="button" className="ml-[2px] w-[73px] border-t-2 border-[#a4a4a4] bg-[#ebebeb] text-[#0f6f84]">主页</button>
            {TABS.map((tab) => (
                <button key={tab} type="button" className="px-[19px] whitespace-nowrap text-[#222]">{tab}</button>
            ))}
            <div className="flex-1" />
            <div className="flex items-center">
                <label className="flex h-[27px] w-[173px] items-center border border-[#8f8f8f] bg-[#ebebeb] pr-[3px]">
                    <input aria-label="查找命令" placeholder="查找命令" className="w-0 flex-1 pl-[2px] text-[15px] outline-none placeholder:text-[#929292]" />
                    <Icon name="mag" className="size-[22px]" />
                </label>
                <Tool name="full" label="全屏" className="w-14" />
                <Tool name="up" label="收起" className="w-5" />
                <Tool name="help" label="帮助" className="w-[54px]" />
                <button type="button" className="flex w-[60px] items-center text-[16px]">
                    <Icon name="hat" className="size-[22px]" />
                    <span className="pl-[3px]">教程</span>
                </button>
                <Tool name="min" label="最小化窗口" />
                <Tool name="restore" label="还原窗口" />
                <Tool name="close" label="关闭窗口" className="w-[30px]" />
            </div>
        </nav>
    )
}

function Ribbon() {
    return (
        <div className="flex h-[132px] shrink-0 border-b border-[#cfcfcf]">
            <Group className="w-[104px]" more={false}>
                <BigTool label="新建图纸页" caret className="w-full pl-1">
                    <Icon name="sheet" box="0 0 34 35" className="size-[40px]" />
                </BigTool>
            </Group>
            <Group label="视图" className="w-[210px]">
                <div className="flex w-[58px] flex-col items-end gap-[14px] pt-[6px] pr-[6px]">
                    <Icon name="viewwizard" box="0 0 34 34" className="size-[34px]" />
                    <Icon name="baseview" box="0 0 34 34" className="size-[34px]" />
                </div>
                <div className="flex flex-col">
                    <ToolRow items={["section", "turned"]} cell="w-[35px]" />
                    <ToolRow items={["detail", "hatched"]} cell="w-[35px]" />
                    <ToolRow items={["breakview", "cutout"]} cell="w-[35px]" />
                </div>
                <BigTool label="更新视图" caret className="w-[72px]">
                    <Icon name="update" box="0 0 48 50" className="size-[46px]" />
                </BigTool>
            </Group>
            <Group label="尺寸" className="w-[184px]">
                <BigTool label="快速" className="w-[68px] pl-3">
                    <Icon name="quick" box="0 0 44 42" className="size-[44px]" />
                </BigTool>
                <div className="flex flex-col">
                    <ToolRow items={["dimlin", "dimchamfer", "dimthick"]} cell="w-[35px]" />
                    <ToolRow items={["dimradius", "dimcurve", "dimordinate"]} cell="w-[35px]" />
                    <ToolRow items={["dimangle", "dimarc"]} cell="w-[35px]" />
                </div>
            </Group>
            <Group label="注释" className="w-[233px]">
                <BigTool label="注释" className="w-[68px] pl-2">
                    <span className="flex size-10 items-center justify-center border-2 border-[#5e5a92] bg-[#dfe0e6] font-['Liberation_Serif',serif] text-[40px] leading-none font-bold text-[#3f4148]">A</span>
                </BigTool>
                <div className="flex flex-col">
                    <ToolRow items={["leader", "balloon", "xmark", "target"]} cell="w-[35px]" />
                    <ToolRow items={["datum", "anglet", "centermark", "hatch"]} cell="w-[35px]" />
                    <ToolRow items={["zoomout", "image", "rough", "bucket"]} cell="w-[35px]" />
                </div>
                <div className="pt-[11px] pl-1"><Caret /></div>
            </Group>
            <Group label="草图" className="w-[74px]">
                <div className="mt-[3px] ml-[10px] flex h-[92px] w-8 flex-col items-center border border-[#c4c4c4]">
                    <Tool name="profile" />
                    <Tool name="rect" />
                    <Tool name="line" />
                </div>
                <div className="flex h-[92px] w-7 flex-col items-center justify-between py-[15px]">
                    <Caret className="rotate-180 text-[#aaa]" />
                    <Caret />
                    <OverflowCaret />
                </div>
            </Group>
            <Group label="表" className="w-[161px]">
                <div className="flex w-[57px] flex-col items-end gap-4 pt-[7px] pr-1">
                    <Icon name="table" box="0 0 34 34" className="size-[34px]" />
                    <Icon name="parts" box="0 0 34 34" className="size-[34px]" />
                </div>
                <div className="flex flex-col">
                    <Tool name="balloon2" />
                    <Tool name="hole" />
                    <Tool name="tableexp" />
                </div>
                <BigTool label="更多" caret className="w-[71px] pl-1">
                    <span className="flex h-[49px] w-[52px] items-center justify-center rounded-md border border-[#cfcfcf]">
                        <Icon name="tablesm" />
                    </span>
                </BigTool>
            </Group>
            <Group className="w-[85px]" more={false}>
                <BigTool label="编辑设置" className="w-full pl-1">
                    <span className="flex h-[44px] items-start text-[#403f78]">
                        <span className="font-['Liberation_Sans',sans-serif] text-[22px] leading-none font-bold">A</span>
                        <span className="border-b-2 border-[#4a40c4] pt-1 font-['Liberation_Serif',serif] text-[40px] leading-[38px] font-bold text-[#4a40c4] italic">A</span>
                    </span>
                </BigTool>
            </Group>
            <Group label="标准..." className="w-[82px]">
                <div className="flex flex-col pl-[5px]">
                    <ToolRow items={["group", "layers"]} cell="w-[34px]" />
                    <ToolRow items={["layerdoc", "tag"]} cell="w-[34px]" />
                    <ToolRow items={["checkcube", "checkpipe"]} cell="w-[34px]" />
                    <ToolRow items={["cone", "cone2"]} cell="w-[34px]" />
                </div>
            </Group>
            <Group label="制图工具 - GC工具箱" className="w-[446px]">
                <div className="flex flex-col pl-[6px]">
                    <ToolRow items={["newsheet", "layers2", "findtable", "pagey", "balloons12", "|", "cubelabel", "|", "csys", "|", "frame", "frame2", "frame3"]} />
                    <div className="flex items-center">
                        <ToolRow items={["gridlines", "finddim"]} />
                        <button type="button" className="flex h-[30px] w-8 flex-col items-center justify-center">
                            <Icon name="find10" box="0 0 24 9" className="h-[9px] w-6" />
                            <span className="text-[9px] leading-[12px] font-bold text-[#3f4148]">10<span className="text-[#c9343f]">H7</span></span>
                        </button>
                        <ToolRow items={["dimrect", "dimx"]} />
                        <button type="button" className="flex h-[30px] w-8 flex-col items-center justify-center">
                            <Icon name="dimabc" box="0 0 24 12" className="h-[11px] w-[22px]" />
                            <span className="text-[10px] leading-[12px] font-bold text-[#3f4148]">ABC</span>
                        </button>
                    </div>
                    <div className="flex items-center">
                        <ToolRow items={["gridxy", "triangle", "tabler", "arrowA", "quarter"]} />
                        <button type="button" className="flex h-[30px] w-8 flex-col items-center justify-center">
                            <Icon name="point" box="0 0 16 8" className="h-[7px] w-4" />
                            <span className="text-[11px] leading-[14px] font-bold text-[#c9343f]">XYZ</span>
                        </button>
                        <ToolRow items={["blank", "tablec", "form", "brushdim", "|", "gearlist", "gear", "|", "springs"]} />
                    </div>
                </div>
            </Group>
            <Group label="尺寸快速格式化工具 - GC工具箱" className="w-[284px]">
                <div className="flex flex-col pl-[6px]">
                    <ToolRow items={["dimpart"]} />
                    <div className="flex items-center">
                        <Tool name="plainx" />
                        <Tolerance top="1.00" lines={["±.05"]} />
                        <Tolerance top="1.00" lines={["+.05", "-.02"]} />
                        <Tolerance top="1.00" lines={["+.05", "-.00"]} />
                        <Tolerance top="1.00" lines={["+.00", "-.02"]} />
                        <Tool name="boxedx" />
                        <Tool name="parenx" />
                        <Tolerance top="10H7" lines={[]} blue />
                    </div>
                    <div className="flex items-center">
                        <Tolerance top="10H7" lines={["(+.01)", "( 0 )"]} blue />
                        <Tolerance top="10H7" lines={["(.015)", "( 0 )"]} blue />
                        <Tolerance top="10" lines={["(.015)", "( 0 )"]} blue />
                        <ToolRow items={["|", "slopedim", "leaddim", "|", "dia1", "dia2", "back"]} />
                    </div>
                </div>
            </Group>
            <div className="flex flex-1 items-end justify-end pr-2 pb-3"><Caret /></div>
        </div>
    )
}

function SelectionBar() {
    return (
        <div className="flex h-11 shrink-0 items-center border-b border-[#8f8f8f]">
            <button type="button" className="flex w-[121px] items-center gap-[7px] pl-[15px] text-[16px]">
                <Icon name="menu" className="size-[22px]" />
                <span>菜单(<u>M</u>)</span>
                <Caret />
            </button>
            <Divider className="h-[34px]" />
            <FilterSelect label="类型过滤器" className="ml-[18px] w-[185px]" />
            <FilterSelect label="选择范围" value="仅在工作部件内" className="ml-[13px] w-[195px]" />
            <div className="flex items-center pl-[7px]">
                <Tool name="filterg" />
                <Tool name="filter" />
                <div className="flex w-4 justify-center"><Caret /></div>
                <Tool name="rotplus" className="w-9" />
                <Tool name="filterdoc" className="w-9" />
                <Tool name="marquee" className="w-[34px]" />
                <div className="flex w-4 justify-center"><Caret /></div>
                <div className="w-[3px]" />
                <ToolRow items={["dots", "seg", "segdot", "curve", "spl", "wave", "arcv", "circ", "circ4", "plus", "seg2", "face"]} cell="w-[35px]" />
                <div className="w-2" />
                <Divider className="h-[34px]" />
                <div className="w-3" />
                <Tool name="fitwin" className="w-[34px]" />
                <Tool name="panwin" className="w-[34px]" />
                <Tool name="layout" className="w-9" />
                <div className="flex w-4 justify-center"><Caret /></div>
                <Tool name="orient" />
                <div className="flex w-4 justify-center"><Caret /></div>
                <div className="w-[14px]" />
                <Divider className="h-[34px]" />
            </div>
            <div className="flex flex-1 justify-end pt-4 pr-2"><Caret /></div>
        </div>
    )
}

function FilterSelect({ label, value = "", className }: { label: string; value?: string; className: string }) {
    return (
        <div className={clsx("grid items-center", className)}>
            <select aria-label={label} className="col-start-1 row-start-1 h-7 appearance-none border-2 border-[#b9b9b9] bg-[#ebebeb] pl-1 text-[15px] text-[#9a9a9a]">
                <option>{value}</option>
            </select>
            <Caret className="col-start-1 row-start-1 mr-2 justify-self-end text-[#9a9a9a]" />
        </div>
    )
}

function Rail() {
    return (
        <aside className="flex w-[46px] shrink-0 flex-col items-center border-r border-[#a8a8a8] bg-[#cbcbcb]">
            <RailButton name="railgear" label="设置" className="h-[38px]" box="0 0 24 24" icon="size-6" />
            <RailButton name="asmnav" label="装配导航器" className="mt-6 h-[54px] pl-[7px]" />
            <RailButton name="partnav" label="部件导航器" className="ml-1 h-[64px] self-stretch border-y border-l border-[#8a8a8a] bg-[#ebebeb] pl-1" />
            <RailButton name="books" label="重用库" className="h-14 pl-[7px]" />
            <RailButton name="eye" label="视图管理器" className="h-14 pl-[7px]" />
            <RailButton name="info" label="HD3D" className="mt-5 h-[60px] pl-[7px]" />
            <RailButton name="web" label="浏览器" className="mt-4 h-[60px] pl-[7px]" />
            <RailButton name="clock" label="历史记录" className="mt-[19px] h-[56px] pl-[7px]" />
            <RailButton name="robot" label="加工向导" className="h-[60px] pl-[7px]" />
            <RailButton name="panel" label="模板" className="h-[60px] pl-[7px]" />
            <RailButton name="panel" label="模板 2" className="h-[58px] pl-[7px]" />
            <Icon name="squig" box="0 0 32 32" className="-mt-7 h-9 w-[38px]" />
            <div className="flex flex-col items-center gap-4">
                <Caret className="rotate-180 text-[#999]" />
                <Caret className="rotate-180 text-[#999]" />
                <Caret />
                <OverflowCaret />
            </div>
        </aside>
    )
}

function RailButton({ name, label, className, box = "0 0 32 34", icon = "size-[34px]" }: { name: string; label: string; className: string; box?: string; icon?: string }) {
    return (
        <button type="button" aria-label={label} className={clsx("flex shrink-0 items-center justify-center", className)}>
            <Icon name={name} box={box} className={icon} />
        </button>
    )
}

const GUIDES: Record<string, string> = {
    " ": "",
    "|": "M13 0V28",
    "t": "M13 0V28M13 14H26",
    "l": "M13 0V14H26",
    "+": "M13 0V8M13 20V28M20 14H27",
    "-": "M13 20V28M20 14H27",
    "=": "M13 0V8M20 14H27",
}

function Guide({ kind }: { kind: string }) {
    const toggle = "+-=".includes(kind)
    return (
        <svg viewBox="0 0 27 28" className="h-7 w-[27px] shrink-0" aria-hidden="true">
            <path d={GUIDES[kind]} stroke="#8c8c8c" strokeWidth="1" strokeDasharray="1 2" fill="none" />
            {toggle && <path d="M7.500 8.500h11v11h-11z" fill="#f2f2f2" stroke="#c9c9c9" />}
            {toggle && <path d={kind === "+" ? "M10 14h6M13 11v6" : "M10 14h6"} stroke="#222" strokeWidth="1.500" />}
        </svg>
    )
}

type TreeItem = { guides: string; icons?: string[]; box?: "solid" | "dashed"; text?: string; dim?: boolean; status?: boolean }

const TREE: TreeItem[] = [
    { guides: "-", icons: ["check", "part"] },
    { guides: "|-", icons: ["check"] },
    { guides: "||t" },
    { guides: "||l" },
    { guides: "|l", icons: ["question"] },
    { guides: "+", icons: ["folderu"], text: "用户表达式" },
    { guides: "+", icons: ["folder"], text: "组" },
    { guides: "=", icons: ["folder"], text: "模型历史记录" },
    { guides: " t", box: "solid" },
    { guides: " =", box: "solid" },
    { guides: "  t" },
    { guides: "  t" },
    { guides: "  t" },
    { guides: "  t" },
    { guides: "  t", box: "solid", icons: ["sketch"], text: "草图 (5) \"SKETC...", dim: true, status: true },
    { guides: "  t", box: "solid", icons: ["bridge"], text: "桥接曲线 (6)", dim: true, status: true },
    { guides: "  t", box: "solid", icons: ["bridge"], text: "桥接曲线 (7)", dim: true, status: true },
    { guides: "  t", box: "solid", icons: ["sweep"], text: "扫掠 (8)", status: true },
    { guides: "  t", box: "solid", icons: ["plane"], text: "固定基准平面 (9)", dim: true, status: true },
    { guides: "  t", box: "solid", icons: ["plane"], text: "基准平面 (10)", dim: true, status: true },
    { guides: "  t", box: "solid", icons: ["plane"], text: "基准平面 (11)", dim: true, status: true },
    { guides: "  t", box: "dashed", icons: ["trim"], text: "修剪体 (12)", status: true },
    { guides: "  t", box: "dashed", icons: ["trim"], text: "修剪体 (13)", status: true },
    { guides: "  t", box: "solid", icons: ["axis"], text: "固定基准轴 (14)", dim: true, status: true },
]

function TreeRow({ item }: { item: TreeItem }) {
    return (
        <li className="flex h-7 shrink-0 items-stretch border-b border-[#dcdcdc]">
            <div className="flex min-w-0 flex-1 items-center overflow-hidden">
                {item.guides.split("").map((kind, i) => <Guide key={i} kind={kind} />)}
                {item.box && (
                    <span className="ml-[2px] grid size-[18px] shrink-0 place-items-center">
                        <input
                            type="checkbox"
                            defaultChecked
                            aria-label={item.text ?? "特征"}
                            className={clsx("col-start-1 row-start-1 size-[17px] appearance-none border-2 border-[#1c1c1c] bg-[#f4f4f4]", item.box === "dashed" && "border-dashed")}
                        />
                        <Icon name="check" className="pointer-events-none col-start-1 row-start-1 size-4" />
                    </span>
                )}
                {item.icons?.map((name) => <Icon key={name} name={name} className="ml-[3px] size-[21px]" />)}
                {item.text && (
                    <span className={clsx("pl-[5px] text-[17px] leading-none whitespace-nowrap", item.dim ? "text-[#919191]" : "text-[#1d1d1d]")}>{item.text}</span>
                )}
            </div>
            <div className={clsx("flex w-10 items-center justify-center pr-[3px]", item.status && "border-l border-[#dcdcdc]")}>
                {item.status && <Icon name="check" className="size-5" />}
            </div>
        </li>
    )
}

function Navigator() {
    return (
        <aside className="flex w-[368px] shrink-0 flex-col border-r-2 border-[#a3a3a3] pr-[13px] pl-[9px]">
            <h2 className="flex h-10 shrink-0 items-center pl-1 text-[17px]">部件导航器</h2>
            <div className="flex min-h-0 flex-1 flex-col border border-[#d0d0d0]">
                <div className="flex h-8 shrink-0 items-center border-b border-[#c4c4c4] bg-[#e2e2e2] pl-[10px] text-[17px]">
                    名称
                    <Caret className="ml-[25px] rotate-180" />
                </div>
                <div className="flex min-h-0 flex-1">
                    <ul className="flex min-w-0 flex-1 flex-col overflow-hidden pt-px">
                        {TREE.map((item, i) => <TreeRow key={i} item={item} />)}
                    </ul>
                    <div className="flex w-[22px] flex-col items-center bg-[#e0e0e0]">
                        <div className="w-[21px] flex-1 border border-[#9a9a9a] bg-linear-to-r from-[#e4e4e4] to-[#bdbdbd]" />
                        <div className="flex h-[52px] items-end pb-[9px]"><Caret /></div>
                    </div>
                </div>
                <div className="flex h-[25px] shrink-0 items-center bg-[#e0e0e0] pr-[33px] pl-[7px]">
                    <Caret className="rotate-90" />
                    <div className="ml-3 flex h-[21px] w-[158px] items-center justify-center gap-1 border border-[#8f8f8f] bg-linear-to-b from-[#e6e6e6] to-[#bcbcbc]">
                        <i className="h-2 w-[2px] bg-[#555]" />
                        <i className="h-2 w-[2px] bg-[#555]" />
                        <i className="h-2 w-[2px] bg-[#555]" />
                    </div>
                    <div className="flex flex-1 justify-end"><Caret className="-rotate-90" /></div>
                </div>
            </div>
            <div className="mt-1 mb-2 h-[6px] shrink-0 border border-[#a9a9a9] bg-[#cfcfcf]" />
        </aside>
    )
}

function Chevron({ className }: { className?: string }) {
    return (
        <svg viewBox="0 0 16 12" className={clsx("h-3 w-4 shrink-0", className)} aria-hidden="true">
            <path d="M2 11l6-8 6 8" fill="none" stroke="#17697f" strokeWidth="2.500" />
        </svg>
    )
}

function SpringDialog() {
    const [target, setTarget] = useState("work")
    const options = [
        { id: "work", label: "在工作部件中" },
        { id: "new", label: "新部件" },
    ]
    const actions = [
        { label: "确定", style: "bg-[#70aabb] text-white border-[#70aabb]" },
        { label: "应用", style: "bg-[#cfcfcf] border-[#a0a0a0]" },
        { label: "取消", style: "bg-[#cfcfcf] border-[#a0a0a0]" },
    ]

    return (
        <div role="dialog" aria-label="弹簧简化画法" className="absolute top-0 left-[134px] z-10 w-[460px] bg-[#dedede] px-2 pb-[14px] text-[17px] text-[#222] shadow-[1px_1px_3px_#aaa]">
            <div className="-mx-2 flex h-[35px] items-center bg-[#5598b0] pr-[13px] pl-[9px] text-white">
                <svg viewBox="0 0 24 24" className="size-[22px]" aria-hidden="true">
                    <circle cx="12" cy="12" r="6.500" fill="none" stroke="#fff" strokeWidth="3" />
                    <path d="M12 2v4M12 18v4M2 12h4M18 12h4M5 5l3 3M16 16l3 3M19 5l-3 3M8 16l-3 3" stroke="#fff" strokeWidth="3" />
                </svg>
                <h2 className="flex-1 pl-[13px] text-[18px]">弹簧简化画法</h2>
                <button type="button" aria-label="重置" className="mr-[9px]">
                    <svg viewBox="0 0 20 20" className="mt-1 size-5">
                        <path d="M12 3a7 7 0 1 1-9 4" fill="none" stroke="#e6f2f5" strokeWidth="2.500" />
                        <path d="M1 4h7v7z" fill="#e6f2f5" />
                    </svg>
                </button>
                <button type="button" aria-label="关闭对话框">
                    <svg viewBox="0 0 18 18" className="size-[18px]">
                        <path d="M2 2l14 14M16 2L2 16" stroke="#fff" strokeWidth="2.500" />
                    </svg>
                </button>
            </div>
            <div className="mt-1 border-b border-[#c2c2c2] bg-[#ebebeb] px-[13px] pb-[13px] shadow-sm">
                <div className="flex h-[47px] items-center justify-between pb-2">
                    <h3 className="-ml-1 text-[20px] text-[#17697f]">设置</h3>
                    <Chevron className="mr-[-5px]" />
                </div>
                <div className="border border-t-0 border-[#d0d0d0] bg-[#dedede] pb-3">
                    <div className="flex h-8 items-center justify-between bg-[#a5c7cf] pr-2 pl-[11px]">
                        <h4 className="text-[#17697f]">列表</h4>
                        <Chevron />
                    </div>
                    <div className="mx-3 mt-[10px] border border-[#f4f4f4] pr-[3px] outline outline-[#cfcfcf]">
                        <table className="w-full table-fixed border-collapse text-left">
                            <colgroup>
                                <col className="w-[113px]" />
                                <col className="w-[113px]" />
                                <col />
                            </colgroup>
                            <thead>
                                <tr className="h-[30px] bg-[#dedede]">
                                    <th className="border-r border-[#cdcdcd] pl-[10px] text-[16px] font-normal">索引</th>
                                    <th className="border-r border-[#cdcdcd] pl-2 text-[16px] font-normal">部件名</th>
                                    <th aria-label="空" />
                                </tr>
                            </thead>
                            <tbody>
                                <tr className="h-7 bg-[#85b5c6] leading-none">
                                    <td className="border-r border-[#d5e4e9] pl-[5px]">1</td>
                                    <td className="border-r border-[#d5e4e9] pl-[6px]">_model10</td>
                                    <td />
                                </tr>
                                {[0, 1, 2].map((row) => (
                                    <tr key={row} className={clsx("border-b border-[#d8d8d8] bg-[#e7e7e7]", row === 2 ? "h-[22px]" : "h-7")}>
                                        <td className="border-r border-[#d4d4d4]" />
                                        <td className="border-r border-[#d4d4d4]" />
                                        <td />
                                    </tr>
                                ))}
                            </tbody>
                        </table>
                    </div>
                </div>
                <fieldset className="mt-1 h-[70px] border border-[#d0d0d0] bg-[#dedede] px-[5px]">
                    <p className="pl-[6px] leading-[30px] text-[#17697f]">Create Option</p>
                    <div className="flex h-[34px] items-center">
                        {options.map((option) => (
                            <label key={option.id} className="mr-[17px] flex items-center gap-[6px]">
                                <input
                                    type="radio"
                                    name="target"
                                    checked={target === option.id}
                                    onChange={() => setTarget(option.id)}
                                    className="size-[17px] appearance-none rounded-full border-2 border-[#a8a8a8] bg-[#dcdcdc] checked:bg-[#1d5c80] checked:shadow-[inset_0_0_0_2px_#d8e2e8]"
                                />
                                <span className={clsx("px-[2px] leading-[25px]", target === option.id && "outline-1 outline-[#444] outline-dotted")}>{option.label}</span>
                            </label>
                        ))}
                    </div>
                </fieldset>
                <div className="mt-1 flex h-[33px] items-center justify-between">
                    <label htmlFor="sheet">图纸页</label>
                    <div className="grid w-[198px] items-center">
                        <select id="sheet" className="col-start-1 row-start-1 h-[33px] appearance-none border border-[#8f8f8f] bg-[#ebebeb] pl-[6px]">
                            <option>A4-h</option>
                        </select>
                        <Caret className="pointer-events-none col-start-1 row-start-1 mr-2 justify-self-end" />
                    </div>
                </div>
            </div>
            <div className="flex justify-end gap-[7px] pt-4 pr-[14px]">
                {actions.map((action) => (
                    <button key={action.label} type="button" className={clsx("h-[35px] w-[76px] border", action.style)}>{action.label}</button>
                ))}
            </div>
        </div>
    )
}

function Spring() {
    const coils = [0, 1, 2, 3, 4, 5, 6, 7]
    return (
        <svg viewBox="0 0 58 130" className="absolute top-[111px] left-[746px] h-[130px] w-[58px]" aria-label="弹簧" strokeLinecap="round">
            <path d="M2 2h52M2 2c0 3 2 4 6 5l42 2M54 2q4 7-4 9L30 12" fill="none" stroke="#111" strokeWidth="2.500" />
            {coils.map((i) => (
                <path key={i} d={`M8 ${13 + i * 14.5}L50 ${10 + i * 14.5}M8 ${10 + i * 14.5}L50 ${7 + i * 14.5}`} stroke="#111" strokeWidth="1.500" />
            ))}
            {coils.map((i) => (
                <g key={i}>
                    <path d={`M7 ${13 + i * 14.5}L50 ${20 + i * 14.5}`} stroke="#111" strokeWidth="12" />
                    <path d={`M7 ${13 + i * 14.5}L50 ${20 + i * 14.5}`} stroke="#bfbfbf" strokeWidth="7.500" />
                    <path d={`M10 ${20 + i * 14.5}l14 2M34 ${11.5 + i * 14.5}l14 0`} stroke="#111" strokeWidth="3.500" />
                </g>
            ))}
            <path d="M2 127h52M2 124h26" stroke="#111" strokeWidth="2.500" />
            <path d="M28 126h26" stroke="#111" strokeWidth="5" />
        </svg>
    )
}

function Canvas() {
    return (
        <main className="flex flex-1 flex-col justify-end bg-[#bfbfbf] pb-1 pl-[15px]">
            <Spring />
            <svg viewBox="0 0 58 58" className="absolute top-[394px] left-[747px] size-[58px]" aria-label="弹簧俯视图" fill="none" stroke="#111">
                <circle cx="29" cy="29" r="27" strokeWidth="2.500" />
                <circle cx="29" cy="29" r="20.500" strokeWidth="2.500" />
                <path d="M50 30h6M16 50l10 4" strokeWidth="3" />
            </svg>
            <p className="absolute top-[518px] left-[573px] text-[31px] leading-[40px] whitespace-nowrap text-[#f00] [text-spacing-trim:space-all]">①. 在设置当中找到【列表框】，创建弹簧简化的视图</p>
            <span className="text-[17px]">"SHT1"</span>
        </main>
    )
}

function Callouts() {
    const box = "pointer-events-none absolute z-20 border-[5px] border-[#fe0000]"
    return (
        <>
            <div className={clsx(box, "-top-[3px] left-[134px] h-9 w-[181px]")} />
            <div className={clsx(box, "top-[127px] left-[158px] h-[71px] w-[258px]")} />
            <div className={clsx(box, "top-[314px] left-[151px] h-11 w-[270px]")} />
            <div className={clsx(box, "top-[75px] left-[705px] h-[208px] w-[157px]")} />
        </>
    )
}

function Pointer() {
    return (
        <svg viewBox="0 0 26 32" className="absolute top-[103px] left-[273px] z-10 h-8 w-[26px]" aria-hidden="true">
            <path d="M8 16V4c0-4 5-4 5 0v8c2-1 3 0 4 1 2-1 3 0 4 1 2 0 4 1 4 4 0 6-1 8-3 10v3H9c-1-5-5-8-8-13 0-3 4-3 7 1z" fill="#f4f4f4" stroke="#222" strokeWidth="1.500" />
            <path d="M13 12v6M17 13v5M21 14v5" stroke="#222" strokeWidth="1.200" />
        </svg>
    )
}

function Watermark() {
    return (
        <div className="pointer-events-none absolute top-[18px] right-3 z-20 flex items-center opacity-80">
            <svg viewBox="0 0 70 50" className="h-[50px] w-[70px]" fill="none" stroke="#8c8c8c" strokeWidth="1.500" aria-hidden="true">
                <path d="M1 9q12-1 14 8v16q2 14 18 15h32V26M17 20q0-12 14-14h20q14 2 14 18M24 18q0-5 6-6h22q6 1 6 8v15q-2 6-8 7H34q-9-1-10-8z" />
                <path d="M42 27l11 6-11 7z" fill="#fff" />
                <path d="M32 17h18M32 22h18" strokeWidth="3" />
            </svg>
            <span className="text-[48px] leading-none font-bold text-transparent [-webkit-text-stroke:1px_#8c8c8c]">虎课网</span>
        </div>
    )
}

function DesktopEdge() {
    return (
        <div className="w-2 shrink-0 bg-[linear-gradient(#3a7cf0_0%,#3a7cf0_22%,#4f90ea_30%,#a5c0e4_43%,#cdd6dc_45%,#7f9430_45%,#5f8030_55%,#465268_55%,#465268_57%,#8c9038_58%,#55703a_64%,#5f8a8a_69%,#2c3034_70%,#2c9a5a_73%,#2c9a5a_76%,#a9a39c_77%,#a9a39c_78%,#3a4c88_79%,#a9a39c_80%,#a9a39c_83%,#3a4c88_84%,#a9a39c_86%,#a9a39c_90%,#34508f_92%,#263c70_100%)]">
            <svg viewBox="0 0 8 240" className="h-[240px] w-2" aria-hidden="true">
                <path d="M0 0l8 6M0 14l8 6M0 22l8 4M0 32l4-6M0 44l8 6M0 50l8-4M0 62l8 12M0 114l8 8M0 130l8 6M0 136l8 4M0 178l8 8M0 184l8 5M0 200l8-4M0 208l8 8M0 216l8 9M0 226l8 4" stroke="#1a2030" strokeWidth="2" />
                <path d="M0 3l8 6M0 47l8 6M0 56l8-4M0 212l8 8M0 222l8 4M0 230l8-2" stroke="#e4e8f0" strokeWidth="2.500" />
            </svg>
        </div>
    )
}

export default function App() {
    return (
        <div className="flex h-screen flex-col overflow-hidden bg-[#14161c] pb-[3px] font-['Noto_Sans','Noto_Sans_CJK_SC',sans-serif] text-[#161616]">
            <div className="flex min-h-0 flex-1">
                <div className="relative flex min-w-0 flex-1 flex-col bg-[#ebebeb]">
                    <TitleBar />
                    <TabBar />
                    <Ribbon />
                    <SelectionBar />
                    <div className="relative flex min-h-0 flex-1">
                        <Rail />
                        <Navigator />
                        <Canvas />
                        <SpringDialog />
                        <Pointer />
                        <Callouts />
                    </div>
                    <footer className="flex h-[30px] shrink-0 items-center justify-end gap-[6px] border-t border-[#b0b0b0] pr-[77px]">
                        <Icon name="flag" className="size-[22px]" />
                        <Icon name="full" className="size-[22px]" />
                    </footer>
                    <Watermark />
                </div>
                <DesktopEdge />
            </div>
        </div>
    )
}
